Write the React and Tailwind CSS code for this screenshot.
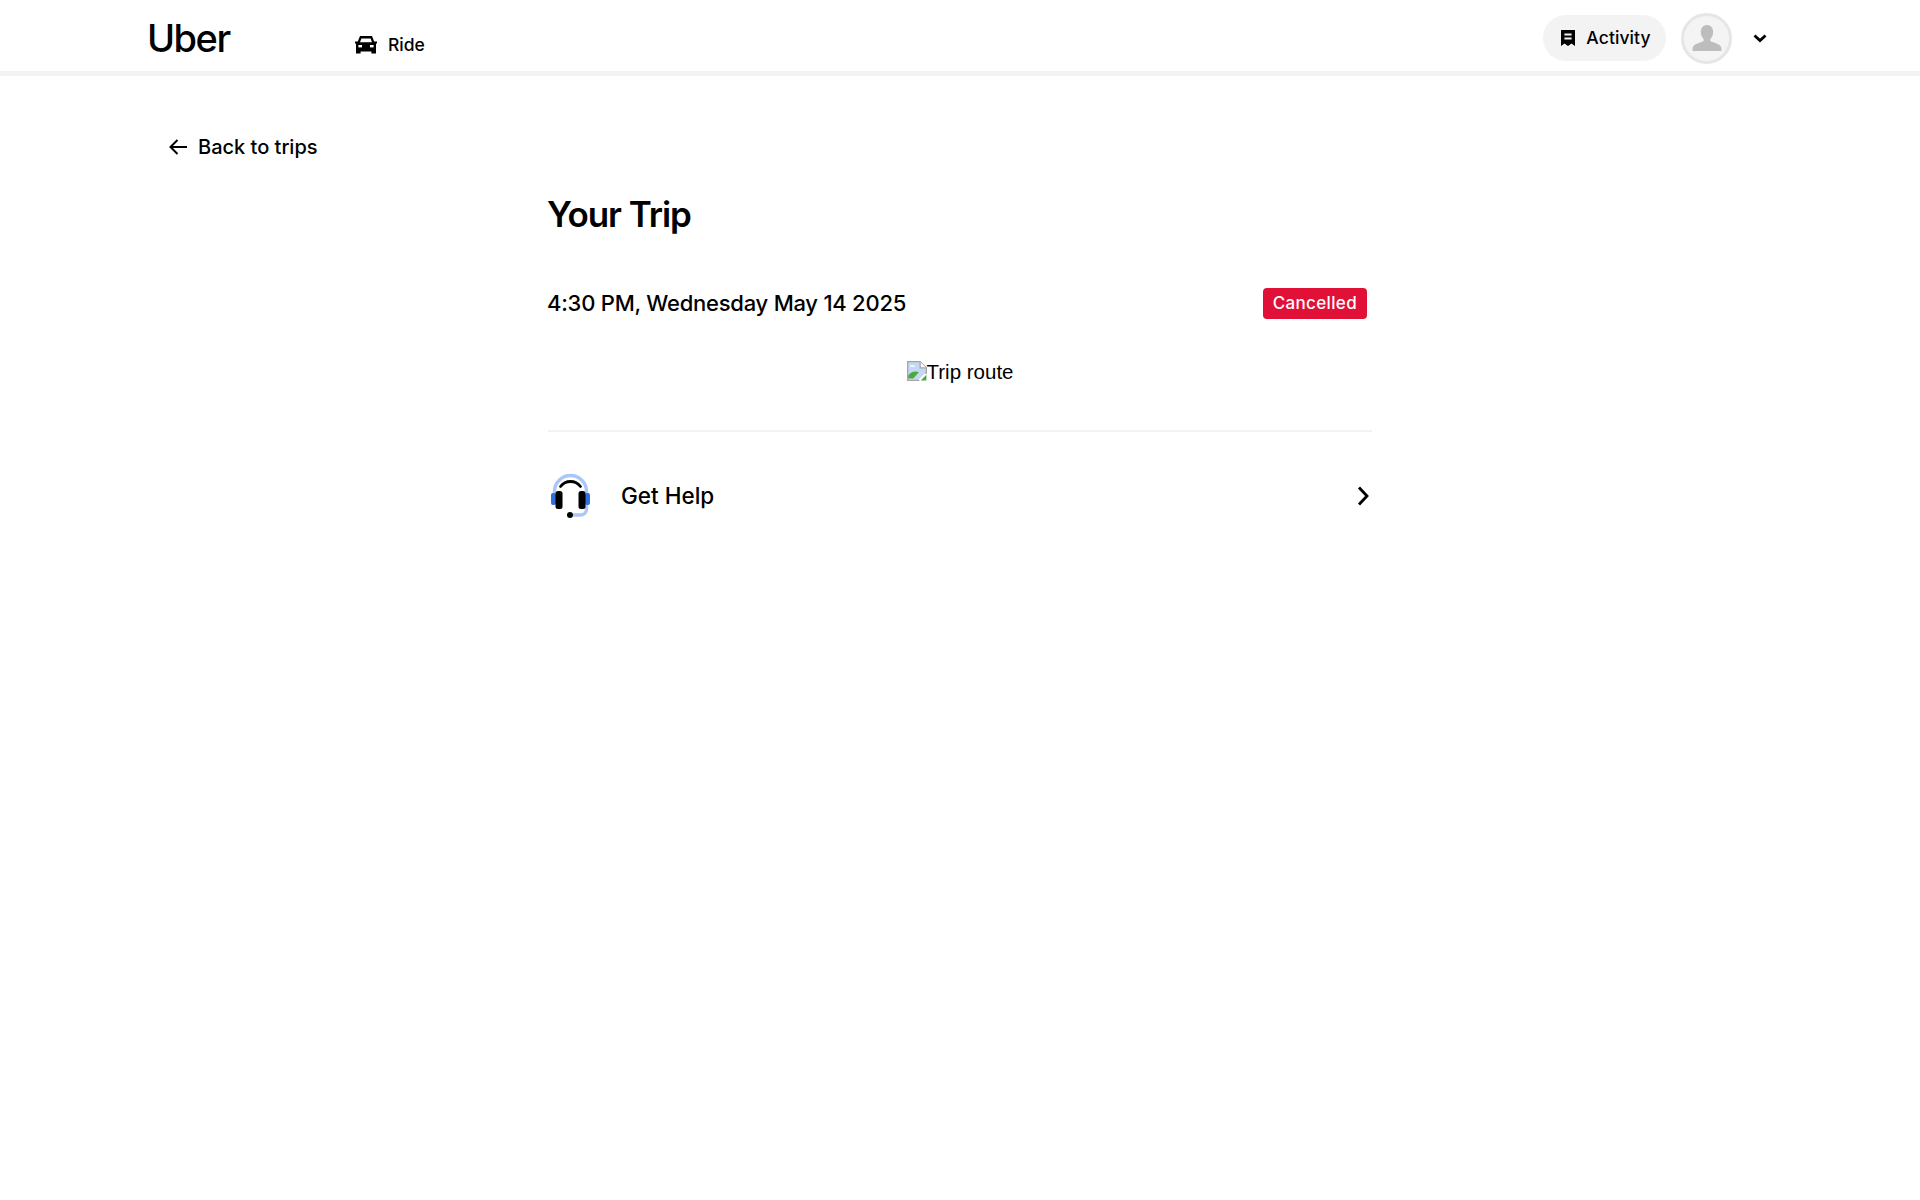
const font = { inter: "font-['Inter',sans-serif]" };

const CarIcon = () => (
  <svg className="-mt-[1px]" width="22" height="18" viewBox="0 0 22 18" fill="#000">
    <path d="M5 0h12l2.200 5.600H22v2h-1v10h-4.600v-2H5.600v2H1v-10H0v-2h2.800L5 0Zm1.400 2.400L5 6.200h12l-1.400-3.800H6.400Z" fillRule="evenodd" />
    <rect x="3.400" y="9" width="3.600" height="2.400" fill="#fff" />
    <rect x="15" y="9" width="3.600" height="2.400" fill="#fff" />
  </svg>
);

const ReceiptIcon = () => (
  <svg width="14" height="16" viewBox="0 0 14 16" fill="#000">
    <path d="M0 0h14v16l-3.500-2.600L7 16l-3.500-2.600L0 16V0Zm3.400 3.600v2h7.200v-2H3.400Zm0 4v2h7.200v-2H3.400Z" fillRule="evenodd" />
  </svg>
);

const Avatar = () => (
  <div className="w-[51px] h-[51px] rounded-full bg-[#f4f4f4] border-[3px] border-[#e6e6e6] flex items-center justify-center">
    <svg width="30" height="27" viewBox="0 0 30 28" fill="#bdbdbd">
      <path d="M15 0c4 0 6.400 3 6.400 7.200 0 3-1.200 5.600-2.800 7v2.600c3 1.200 11.400 3 11.400 7.400V27H0v-2.800c0-4.400 8.400-6.200 11.400-7.400v-2.600c-1.600-1.400-2.800-4-2.800-7C8.600 3 11 0 15 0Z" />
    </svg>
  </div>
);

const Headset = () => (
  <svg width="39" height="46" viewBox="0 0 39 46" fill="none">
    <path d="M3.500 24V19.500a16 16 0 0 1 32 0v17.500c0 4-3 6-6 6H22" stroke="#a9c8f7" strokeWidth="3.400" />
    <path d="M9.500 14.500a12.500 12.500 0 0 1 20 0" stroke="#000" strokeWidth="2.800" strokeLinecap="round" />
    <rect x="0" y="21" width="5" height="12" rx="2" fill="#2f6fe0" />
    <rect x="34" y="21" width="5" height="12" rx="2" fill="#2f6fe0" />
    <rect x="4.500" y="19" width="7" height="18" rx="2.500" fill="#000" />
    <rect x="27.500" y="19" width="7" height="18" rx="2.500" fill="#000" />
    <circle cx="19" cy="43" r="3" fill="#000" />
  </svg>
);

const BrokenImage = () => (
  <svg className="-mt-[2px]" width="20" height="20" viewBox="0 0 16 16">
    <path d="M0.500 0.500h10l5 5v4l-6 6h-9z" fill="#c4d8f5" stroke="#a5a5a5" />
    <path d="M2 4.500c1-1.500 3.500-1.500 5 0H2Z" fill="#fff" />
    <path d="M1 14v-2.500C3 9 6 7.500 9.500 9L5 14Z" fill="#4fa83d" />
    <path d="M10.500 0.500v5h5" fill="#fff" stroke="#a5a5a5" />
    <path d="M15 10.500 10 15.500" stroke="#fff" strokeWidth="2" />
    <path d="M11 15.500h4.500V11Z" fill="#4fa83d" />
  </svg>
);

export default function App() {
  return (
    <div className={`min-h-[1200px] bg-white text-black ${font.inter}`}>
      {/* top bar */}
      <header className="h-[76px] border-b-[5px] border-[#f3f3f3] pl-[147px] pr-[153px] pt-[5px] flex items-center">
        <span className="w-[208px] text-[38px] leading-none font-medium tracking-[-0.04em]">Uber</span>
        <div className="flex items-center gap-[11px] mt-[15px]">
          <CarIcon />
          <span className="text-[17.5px] font-medium">Ride</span>
        </div>
        <div className="ml-auto flex items-center">
          <button className="h-[46px] w-[123px] pl-[3px] rounded-full bg-[#f3f3f3] flex items-center justify-center gap-[11px]">
            <ReceiptIcon />
            <span className="text-[17.5px] font-medium mt-[1px] tracking-[0.005em]">Activity</span>
          </button>
          <div className="ml-[15px]">
            <Avatar />
          </div>
          <svg className="ml-[21px]" width="14" height="9" viewBox="0 0 14 9" fill="none">
            <path d="M1.500 1.500 7 6.500l5.500-5" stroke="#000" strokeWidth="2.800" />
          </svg>
        </div>
      </header>

      <div className="pl-[169px] pt-[56px]">
        <button className="flex items-center gap-[11px]">
          <svg width="18" height="16" viewBox="0 0 18 16" fill="none">
            <path d="M18 8H2M8.500 1 1.500 8l7 7" stroke="#000" strokeWidth="2" />
          </svg>
          <span className="text-[20px] font-medium">Back to trips</span>
        </button>
      </div>

      <main className="w-[824px] mx-auto mt-[30px]">
        <h1 className="-ml-[1px] text-[35px] leading-[44px] font-semibold tracking-[-0.03em]">Your Trip</h1>

        <div className="mt-[51px] flex items-center justify-between pr-[5px]">
          <span className="-ml-[1px] text-[22px] font-medium tracking-[-0.011em]">4:30 PM, Wednesday May 14 2025</span>
          <span className="h-[31px] px-[10px] rounded-[4px] bg-[#e11037] text-white text-[17px] font-medium flex items-center tracking-[0.02em]">
            Cancelled
          </span>
        </div>

        <div className="mt-[37px] flex items-center justify-center font-['Liberation_Sans',sans-serif] text-[20.5px]">
          <BrokenImage />
          <span>Trip route</span>
        </div>

        <div className="mt-[42px] h-[2px] bg-[#f3f3f3]" />

        <div className="mt-[42px] flex items-center">
          <div className="ml-[3px] mr-[1px] -mt-[2px]">
            <Headset />
          </div>
          <span className="ml-[30px] text-[22.5px] font-medium">Get Help</span>
          <svg className="ml-auto mr-[3px]" width="12" height="20" viewBox="0 0 12 20" fill="none">
            <path d="M2 1.500 10 10l-8 8.500" stroke="#000" strokeWidth="2.800" />
          </svg>
        </div>
      </main>
    </div>
  );
}
